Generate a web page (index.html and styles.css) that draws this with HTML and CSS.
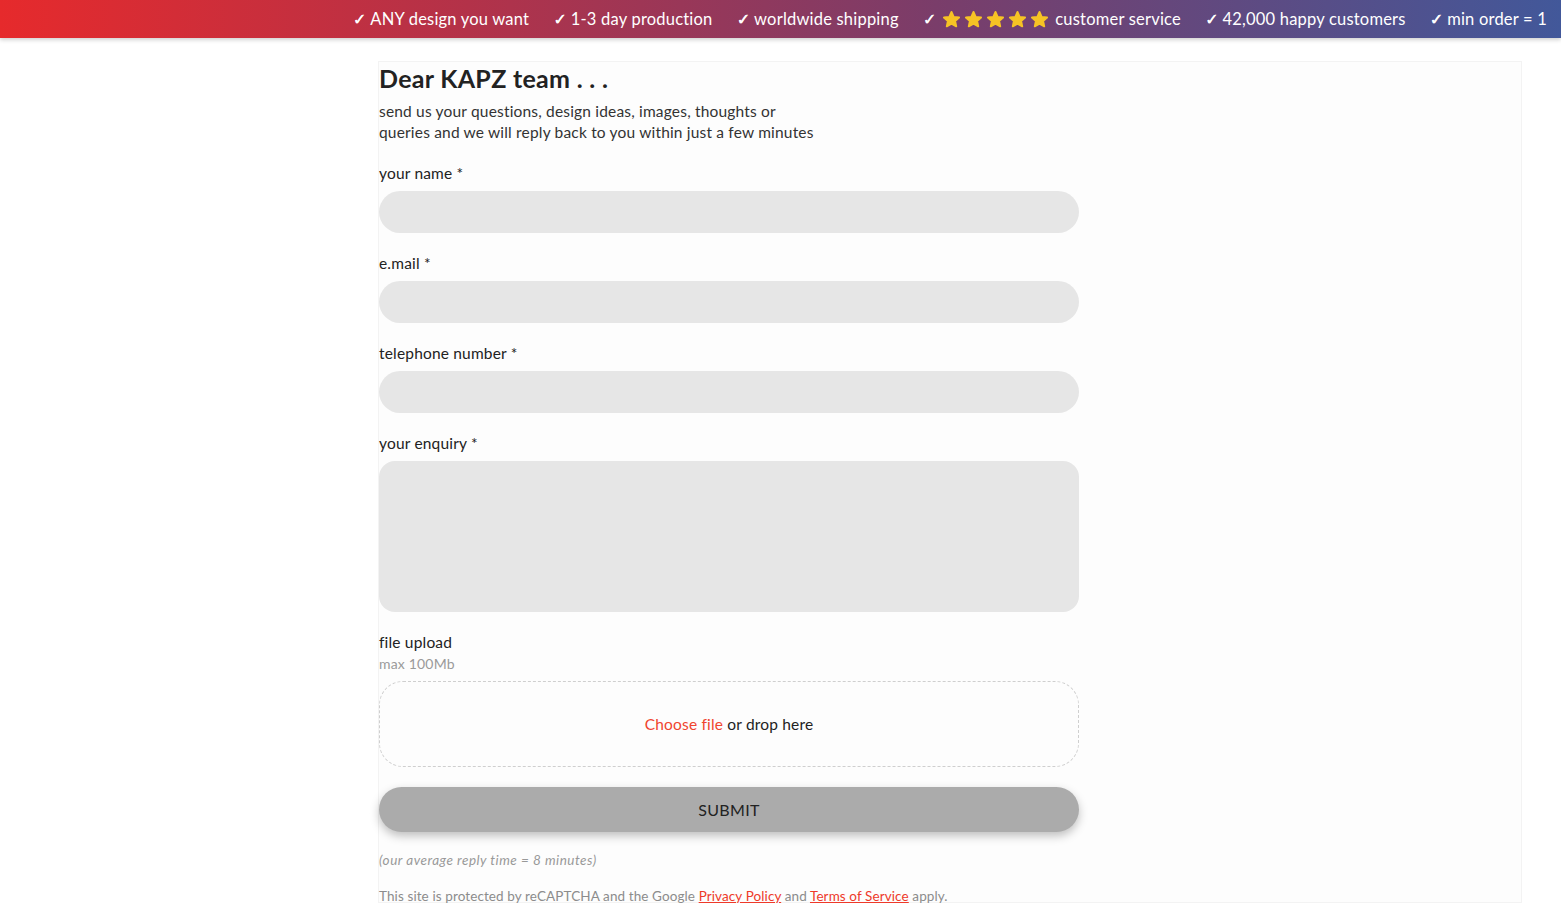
FILE: index.html
```html
<!DOCTYPE html>
<html>
<head>
<meta charset="utf-8">
<link rel="stylesheet" href="styles.css">
</head>
<body>
<header class="topbar">
  <span class="usp"><span class="tick">✓</span> ANY design you want</span>
  <span class="usp"><span class="tick">✓</span> 1-3 day production</span>
  <span class="usp"><span class="tick">✓</span> worldwide shipping</span>
  <span class="usp"><span class="tick">✓</span>
    <span class="stars">
      <svg viewBox="0 0 20 20"><polygon points="10,2 12.4,7.4 18,7.9 13.8,11.6 15,17.2 10,14.3 5,17.2 6.2,11.6 2,7.9 7.6,7.4"/></svg>
      <svg viewBox="0 0 20 20"><polygon points="10,2 12.4,7.4 18,7.9 13.8,11.6 15,17.2 10,14.3 5,17.2 6.2,11.6 2,7.9 7.6,7.4"/></svg>
      <svg viewBox="0 0 20 20"><polygon points="10,2 12.4,7.4 18,7.9 13.8,11.6 15,17.2 10,14.3 5,17.2 6.2,11.6 2,7.9 7.6,7.4"/></svg>
      <svg viewBox="0 0 20 20"><polygon points="10,2 12.4,7.4 18,7.9 13.8,11.6 15,17.2 10,14.3 5,17.2 6.2,11.6 2,7.9 7.6,7.4"/></svg>
      <svg viewBox="0 0 20 20"><polygon points="10,2 12.4,7.4 18,7.9 13.8,11.6 15,17.2 10,14.3 5,17.2 6.2,11.6 2,7.9 7.6,7.4"/></svg>
    </span>
    customer service</span>
  <span class="usp"><span class="tick">✓</span> 42,000 happy customers</span>
  <span class="usp"><span class="tick">✓</span> min order = 1</span>
</header>
<main class="page">
  <section class="card">
    <form class="form">
      <h1 class="title">Dear KAPZ team . . .</h1>
      <p class="intro">send us your questions, design ideas, images, thoughts or<br>queries and we will reply back to you within just a few minutes</p>
      <div class="field">
        <label class="label">your name *</label>
        <div class="input"></div>
      </div>
      <div class="field">
        <label class="label">e.mail *</label>
        <div class="input"></div>
      </div>
      <div class="field">
        <label class="label">telephone number *</label>
        <div class="input"></div>
      </div>
      <div class="field">
        <label class="label">your enquiry *</label>
        <div class="textarea"></div>
      </div>
      <div class="field upload">
        <label class="label">file upload</label>
        <div class="hint">max 100Mb</div>
        <div class="dropzone"><span class="choose">Choose file</span>&nbsp;or drop here</div>
      </div>
      <button type="button" class="submit">SUBMIT</button>
      <p class="reply">(our average reply time = 8 minutes)</p>
      <p class="legal">This site is protected by reCAPTCHA and the Google <a href="#">Privacy Policy</a> and <a href="#">Terms of Service</a> apply.</p>
    </form>
  </section>
</main>
</body>
</html>
```

FILE: styles.css
```css
* { box-sizing: border-box; }
html, body { margin: 0; padding: 0; }
body {
  font-family: Lato, "Open Sans", sans-serif;
  background: #ffffff;
  color: #333;
  letter-spacing: 0.18px;
}
.topbar {
  height: 38px;
  display: flex;
  justify-content: flex-end;
  align-items: center;
  gap: 24px;
  padding-right: 14px;
  background: linear-gradient(90deg, #e62a2c 0%, #b33249 30%, #7a3d6a 60%, #42589a 100%);
  color: #fff;
  font-size: 16.5px;
  letter-spacing: 0.2px;
  box-shadow: 0 2px 4px rgba(0,0,0,0.18);
  position: relative;
  z-index: 1;
}
.usp { white-space: nowrap; display: inline-flex; align-items: center; gap: 4px; }
.tick { font-family: "DejaVu Sans", sans-serif; font-weight: 700; font-size: 16px; text-shadow: 0.7px 0 0 #fff; }
.stars { display: inline-flex; gap: 3px; margin: 0 2px; }
.stars svg { width: 19px; height: 19px; }
.stars polygon { fill: #f6c325; stroke: #f6c325; stroke-width: 2; stroke-linejoin: round; }
.page {
  padding: 23px 39px 15px 378px;
}
.card {
  background: #fdfdfd;
  border: 1px solid #f3f3f3;
  height: 842px;
}
.form {
  width: 700px;
  padding-top: 1px;
}
.title {
  font-size: 25px;
  font-weight: 700;
  color: #222;
  margin: 0;
  line-height: 30px;
  letter-spacing: 0.3px;
}
.intro {
  margin: 8px 0 0;
  font-size: 15.5px;
  line-height: 21px;
  color: #333;
}
.field { margin-top: 20px; }
.label {
  display: block;
  font-size: 15.5px;
  line-height: 20px;
  color: #222;
  margin-bottom: 8px;
}
.input {
  height: 42px;
  border-radius: 21px;
  background: #e6e6e6;
}
.textarea {
  height: 151px;
  border-radius: 16px;
  background: #e6e6e6;
}
.upload .label { margin-bottom: 2px; }
.hint {
  font-size: 14px;
  color: #9a9a9a;
  line-height: 20px;
  margin-bottom: 7px;
}
.dropzone {
  height: 86px;
  border: 1px dashed #cfcfcf;
  border-radius: 24px;
  display: flex;
  justify-content: center;
  align-items: center;
  font-size: 15.5px;
  color: #222;
}
.choose { color: #f0452f; }
.submit {
  display: block;
  width: 700px;
  height: 45px;
  margin-top: 20px;
  border: none;
  border-radius: 23px;
  background: #ababab;
  color: #222;
  font-family: inherit;
  font-size: 16px;
  letter-spacing: 0.3px;
  box-shadow: 0 4px 10px rgba(0,0,0,0.25);
}
.reply {
  margin: 19px 0 0;
  font-size: 13.5px;
  font-style: italic;
  color: #999;
  line-height: 18px;
  letter-spacing: 0.5px;
}
.legal {
  margin: 18px 0 0;
  font-size: 13.5px;
  color: #8c8c8c;
  line-height: 18px;
  letter-spacing: 0.1px;
}
.legal a { color: #ee3a2a; text-decoration: underline; }
```
